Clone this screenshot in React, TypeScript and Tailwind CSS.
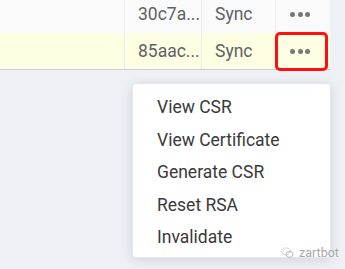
import React from "react";

const Dots = () => (
  <div className="flex items-center gap-[2.7px]">
    <span className="block w-[5px] h-[5px] rounded-full bg-[#777]" />
    <span className="block w-[5px] h-[5px] rounded-full bg-[#777]" />
    <span className="block w-[5px] h-[5px] rounded-full bg-[#777]" />
  </div>
);

const Row = ({ id, bg, last }: { id: string; bg: string; last?: boolean }) => (
  <div className={`flex h-[37px] ${bg} ${last ? "border-b border-[#c9cbd0]" : ""}`}>
    <div className="w-[125px] border-r border-[#ebedf0]" />
    <div className="w-[77px] border-r border-[#ebedf0] flex items-center pl-[13px] text-[17.5px] text-[#606266] whitespace-nowrap">
      {id}
    </div>
    <div className="w-[74px] border-r border-[#ebedf0] flex items-center pl-[13px] text-[17.5px] text-[#606266]">
      Sync
    </div>
    <div className="w-[54px] flex items-center pl-[14px]">
      <Dots />
    </div>
  </div>
);

export default function App() {
  const items = ["View CSR", "View Certificate", "Generate CSR", "Reset RSA", "Invalidate"];
  return (
    <div
      className="relative w-[345px] h-[269px] overflow-hidden bg-[#edf0f5]"
      style={{ fontFamily: "Roboto, 'Noto Sans', sans-serif" }}
    >
      <div className="w-[330px] mt-[-4px]">
        <Row id="30c7a..." bg="bg-[#fafafa]" />
        <Row id="85aac..." bg="bg-[#fefee2]" last />
      </div>

      <div className="absolute left-[275px] top-[32px] w-[53px] h-[39px] border-[3px] border-[#ff1010] rounded-[5px]" />

      <div className="absolute left-[132px] top-[83px] w-[199px] h-[175px] bg-white border border-[#e4e7ed] rounded-[4px] shadow-[0_2px_12px_0_rgba(0,0,0,0.12)] pt-[7px]">
        {items.map((t) => (
          <div key={t} className="h-[32.5px] flex items-center pl-[24px] text-[17.5px] text-[#3a3a3a] whitespace-nowrap">
            {t}
          </div>
        ))}
      </div>

      <div className="absolute left-[281px] top-[244px] flex items-center gap-[5px] text-[12.5px] text-[#a8a8a8] [text-shadow:0_0_2px_#fff]">
        <svg width="13" height="12" viewBox="0 0 12 11" fill="none" stroke="#b5b5b5" strokeWidth="0.9">
          <ellipse cx="4.5" cy="4" rx="3.8" ry="3.2" strokeDasharray="1.5 1" />
          <ellipse cx="7.8" cy="6.8" rx="3.2" ry="2.7" />
        </svg>
        <span>zartbot</span>
      </div>
    </div>
  );
}
